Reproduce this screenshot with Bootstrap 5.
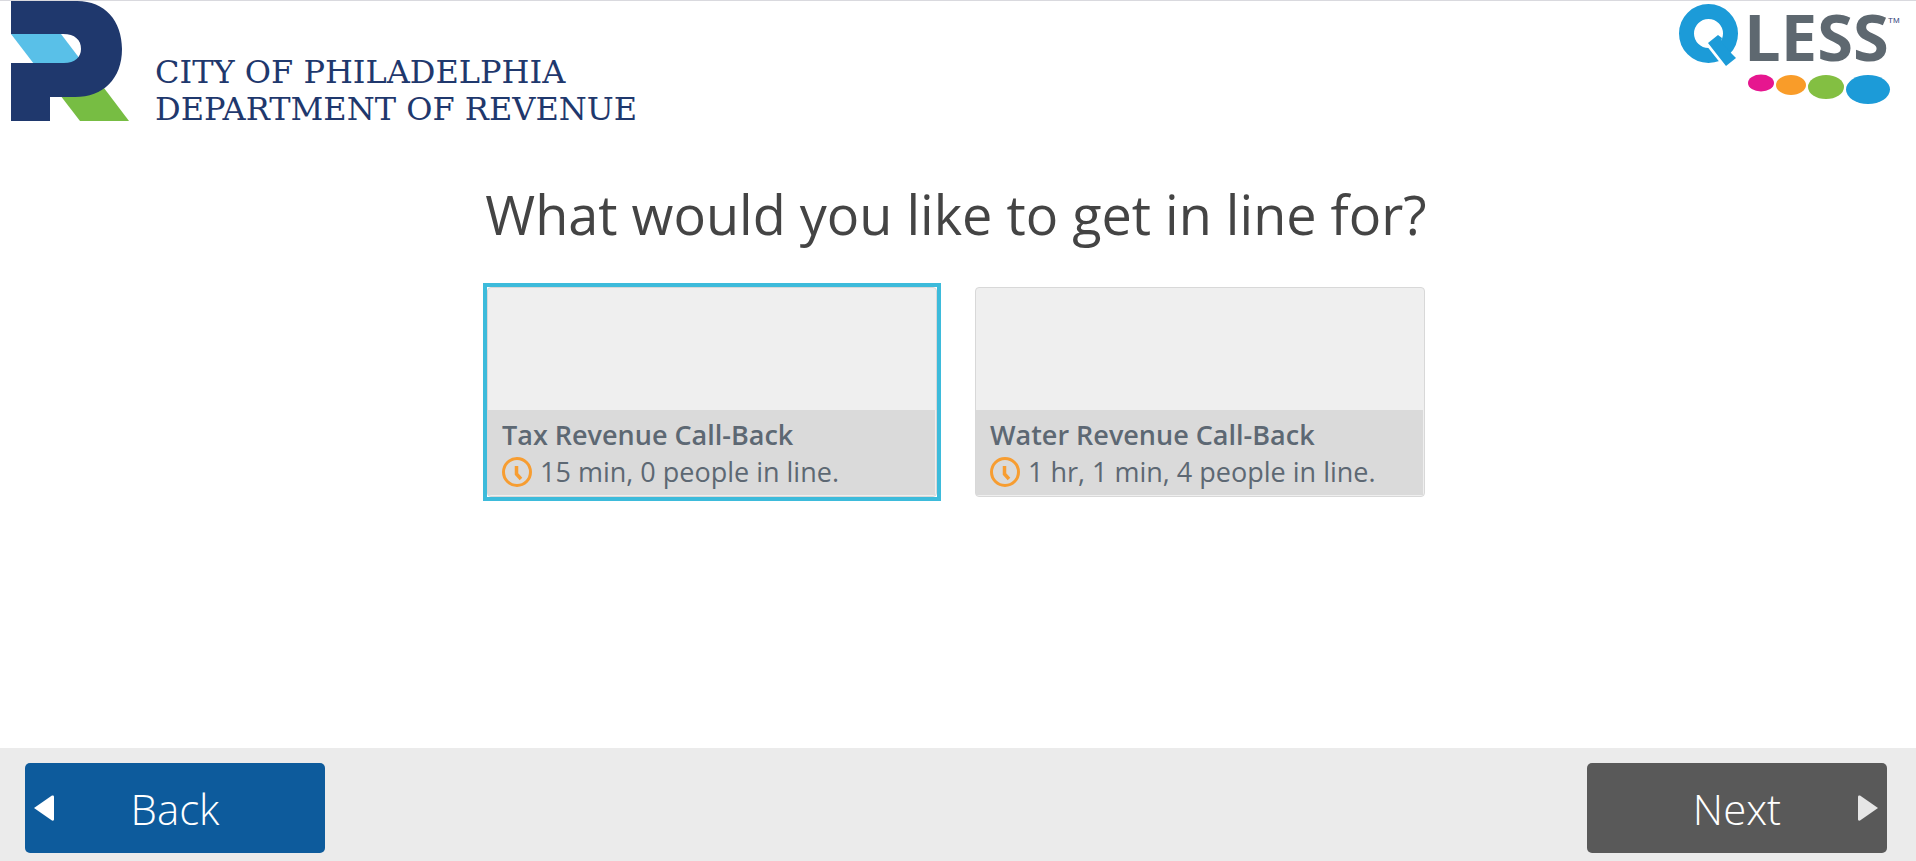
<!DOCTYPE html>
<html lang="en">
<head>
<meta charset="utf-8">
<meta name="viewport" content="width=device-width, initial-scale=1">
<title>City of Philadelphia Department of Revenue</title>
<link href="https://cdn.jsdelivr.net/npm/bootstrap@5.3.0/dist/css/bootstrap.min.css" rel="stylesheet">
<style>
  body { font-family: "Open Sans", "Noto Sans", sans-serif; color: #444; background: #fff; border-top: 1px solid #d9d9de; }
  .brand-name { font-family: "DejaVu Serif", serif; font-size: 32px; line-height: 37px; color: #1f386d; margin-left: 26px; margin-bottom: -7px; }
  .site-header { padding: 0 12px 0 11px; }
  .question { font-size: 54px; line-height: 74px; margin: 56px 0 36px; }
  .queue-list { gap: 38px; }
  .queue-slot.active { outline: 4px solid #3dbbdb; }
  .queue { width: 450px; height: 210px; padding: 0 1px 1px 0; background: #efefef; border: 1px solid #d8d8d8; border-radius: 4px; font-size: 27px; line-height: 37px; color: #5d6873; }
  .queue-info { background: #dadada; padding: 6px 14px 5px; }
  .queue-info strong { font-weight: 600; }
  .wait { gap: 8px; }
  .site-footer { background: #ebebeb; padding: 15px 29px 8px 25px; }
  .nav-btn { width: 300px; height: 90px; border: 0; border-radius: 5px; padding: 0 9px; font-size: 42px; line-height: 57px; font-weight: 300; color: #fff; }
  .nav-btn span { flex: 1; }
  .btn-back { background: #0d5b9c; padding-right: 29px; }
  .btn-next { background: #595959; padding-left: 29px; }
</style>
</head>
<body class="min-vh-100 d-flex flex-column">
<header class="site-header d-flex flex-wrap justify-content-between align-items-start">
  <div class="d-flex align-items-end">
    <svg width="118" height="120" viewBox="0 0 118 120" role="img" aria-label="Department of Revenue logo">
      <path fill="#59c0e8" d="M0 33H50L69 58L60 63H23Z"/>
      <path fill="#77bd43" d="M49 94L93 87L118 120H69Z"/>
      <path fill="#1f386d" fill-rule="evenodd" d="M0 0H66C94 0 111 20 111 48C111 78 92 96 64 96H39V120H0V62H53C64 62 70 56 70 48C70 39 64 33 52 33H0Z"/>
    </svg>
    <div class="brand-name">CITY OF PHILADELPHIA<br>DEPARTMENT OF REVENUE</div>
  </div>
  <svg class="overflow-visible" width="226" height="106" viewBox="0 0 226 106" role="img" aria-label="QLESS">
    <circle cx="30.500" cy="32.500" r="22" fill="none" stroke="#1c9bd8" stroke-width="15"/>
    <path fill="#fff" d="M28 44L31 41L50 64L47 68Z"/>
    <path fill="#1c9bd8" d="M30 42L40 34L44 37L43 41L54 53L58 57L48 65Z"/>
    <text x="66" y="60" font-family="Open Sans, Noto Sans, sans-serif" font-size="65" font-weight="700" fill="#5e6870">LESS</text>
    <text x="210" y="22" font-family="Liberation Sans, sans-serif" font-size="8" fill="#33437a">TM</text>
    <ellipse cx="83" cy="82" rx="13" ry="8.500" fill="#e6168f"/>
    <ellipse cx="113" cy="84" rx="15" ry="10" fill="#f99c29"/>
    <ellipse cx="148" cy="86" rx="18" ry="12" fill="#83bf42"/>
    <ellipse cx="190" cy="88.500" rx="22" ry="14.500" fill="#1c9bd8"/>
  </svg>
</header>
<main class="flex-grow-1 d-flex flex-column align-items-center pe-1">
  <h1 class="question fw-normal text-center">What would you like to get in line for?</h1>
  <div class="queue-list d-flex flex-wrap justify-content-center">
    <div class="queue-slot active">
      <button type="button" class="queue d-flex flex-column justify-content-end text-start" aria-pressed="true">
        <span class="queue-info d-block w-100">
          <strong class="d-block">Tax Revenue Call-Back</strong>
          <span class="wait d-flex align-items-center">
            <svg width="30" height="30" viewBox="0 0 30 30" fill="none" stroke="#f79d31" aria-hidden="true"><circle cx="15" cy="15" r="13.500" stroke-width="3"/><path stroke-width="3.500" d="M14.500 9V17L19 22"/></svg>
            <span>15 min, 0 people in line.</span>
          </span>
        </span>
      </button>
    </div>
    <div class="queue-slot">
      <button type="button" class="queue d-flex flex-column justify-content-end text-start" aria-pressed="false">
        <span class="queue-info d-block w-100">
          <strong class="d-block">Water Revenue Call-Back</strong>
          <span class="wait d-flex align-items-center">
            <svg width="30" height="30" viewBox="0 0 30 30" fill="none" stroke="#f79d31" aria-hidden="true"><circle cx="15" cy="15" r="13.500" stroke-width="3"/><path stroke-width="3.500" d="M14.500 9V17L19 22"/></svg>
            <span>1 hr, 1 min, 4 people in line.</span>
          </span>
        </span>
      </button>
    </div>
  </div>
</main>
<footer class="site-footer d-flex justify-content-between">
  <button type="button" class="nav-btn btn-back d-flex align-items-center">
    <svg width="20" height="26" viewBox="0 0 20 26" aria-hidden="true"><path fill="#fff" d="M0 13L18 .500Q20 0 20 1.500V24.500Q20 26 18 25.500Z"/></svg>
    <span>Back</span>
  </button>
  <button type="button" class="nav-btn btn-next d-flex align-items-center">
    <span>Next</span>
    <svg width="20" height="26" viewBox="0 0 20 26" aria-hidden="true"><path fill="#e6e6e6" d="M20 13L2 .500Q0 0 0 1.500V24.500Q0 26 2 25.500Z"/></svg>
  </button>
</footer>
<script src="https://cdn.jsdelivr.net/npm/bootstrap@5.3.0/dist/js/bootstrap.bundle.min.js"></script>
</body>
</html>
